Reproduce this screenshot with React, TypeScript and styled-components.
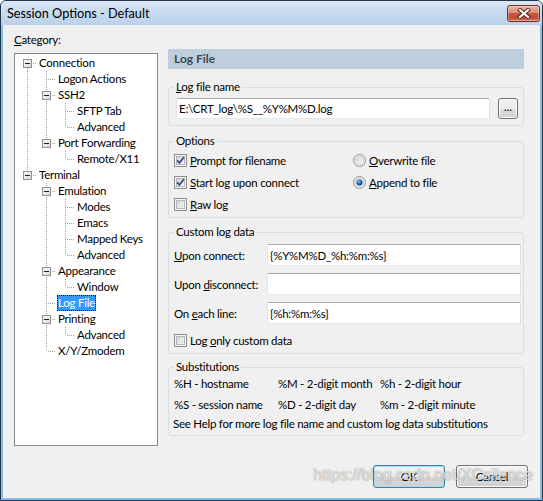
import React from "react";
import styled, { createGlobalStyle } from "styled-components";

const FONT = `Lato, "Noto Sans", sans-serif`;

const GlobalStyle = createGlobalStyle`
  html, body {
    margin: 0;
    padding: 0;
    background: #ffffff;
  }
  body {
    font-family: ${FONT};
  }
`;

const Window = styled.div`
  position: relative;
  width: 543px;
  height: 501px;
  box-sizing: border-box;
  border: 1px solid #243549;
  border-radius: 6px 6px 0 0;
  background: #86bde8;
  display: flex;
  flex-direction: column;
  overflow: hidden;
  font: 11.5px ${FONT};
  letter-spacing: -0.25px;
  color: #000;
`;

const TitleBar = styled.div`
  height: 24px;
  flex: none;
  display: flex;
  align-items: flex-start;
  justify-content: space-between;
  padding: 0 2px 0 6px;
  background: linear-gradient(to bottom, #dce8f5 0%, #c8daef 45%, #bcd2eb 100%);
`;

const Title = styled.span`
  font-size: 12.7px;
  letter-spacing: 0;
  line-height: 25px;
  color: #000;
`;

const CloseButton = styled.div`
  margin-top: 4px;
  width: 33px;
  height: 17px;
  box-sizing: border-box;
  border: 1px solid #6e2e24;
  border-radius: 3px;
  background: linear-gradient(
    to bottom,
    #eab2a2 0%,
    #db8e7b 45%,
    #c65640 50%,
    #c24a33 80%,
    #d77a5f 100%
  );
  box-shadow: inset 0 0 0 1px rgba(255, 255, 255, 0.35);
  display: flex;
  align-items: center;
  justify-content: center;
`;

const Client = styled.div`
  position: relative;
  flex: 1;
  margin: 0 2px 2px 2px;
  background: #f0f0f0;
  display: flex;
  flex-direction: column;
`;

const Main = styled.div`
  display: grid;
  grid-template-columns: 144px 356px;
  column-gap: 10px;
  align-items: start;
  padding: 7px 0 0 11px;
`;

const LeftColumn = styled.div`
  display: flex;
  flex-direction: column;
`;

const CategoryLabel = styled.div`
  line-height: 16px;
  margin-bottom: 5px;
`;

const Key = styled.span`
  text-decoration: underline;
`;

const TreeBox = styled.div`
  height: 393px;
  box-sizing: border-box;
  border: 1px solid #828790;
  background: #ffffff;
  padding: 1px 0 0 3px;
`;

const TreeRow = styled.div`
  display: flex;
  align-items: center;
  height: 16px;
`;

const TreeText = styled.span<{ $selected?: boolean }>`
  margin-left: 1px;
  padding: 0 1px;
  height: 16px;
  line-height: 16px;
  box-sizing: border-box;
  white-space: nowrap;
  background: ${(p) => (p.$selected ? "#3399ff" : "transparent")};
  color: ${(p) => (p.$selected ? "#ffffff" : "#000000")};
  outline: ${(p) => (p.$selected ? "1px dotted #1a1a1a" : "none")};
  outline-offset: -1px;
`;

const RightColumn = styled.div`
  margin-top: 17px;
  display: flex;
  flex-direction: column;
`;

const Header = styled.div`
  height: 20px;
  line-height: 20px;
  padding-left: 6px;
  background: #bfcedc;
  color: #3e4650;
  font-weight: bold;
  font-size: 12px;
  letter-spacing: 0;
`;

const Group = styled.fieldset<{ $top: number; $pad: string }>`
  margin: ${(p) => p.$top}px 0 0 0;
  padding: ${(p) => p.$pad};
  min-width: 0;
  border: 1px solid #d5dfe5;
  border-radius: 3px;
`;

const Legend = styled.legend`
  margin-left: 0;
  padding: 0 2px;
  line-height: 14px;
  color: #000;
`;

const FileRow = styled.div`
  display: flex;
  gap: 8px;
  padding-left: 2px;
`;

const TextBox = styled.input<{ $h: number }>`
  box-sizing: border-box;
  width: 100%;
  min-width: 0;
  height: ${(p) => p.$h}px;
  margin: 0;
  padding: 0 2px;
  border: 1px solid #abadb3;
  border-color: #abadb3 #dbdfe6 #e3e9ef #e2e3ea;
  border-radius: 2px;
  background: #ffffff;
  font: inherit;
  letter-spacing: inherit;
  color: #000;
  outline: none;
`;

const SmallButton = styled.button`
  flex: none;
  width: 20px;
  height: 21px;
  box-sizing: border-box;
  padding: 0 0 4px 0;
  border: 1px solid #707070;
  border-radius: 3px;
  background: linear-gradient(#f2f2f2 0%, #ebebeb 50%, #dddddd 50%, #cfcfcf 100%);
  box-shadow: inset 0 0 0 1px #fcfcfc;
  font: inherit;
  color: #000;
  line-height: 12px;
`;

const OptionsGrid = styled.div`
  display: grid;
  grid-template-columns: 179px 1fr;
  grid-auto-rows: 22px;
`;

const Choice = styled.label`
  display: flex;
  align-items: center;
  gap: 3px;
  white-space: nowrap;
`;

const CustomGrid = styled.div`
  display: grid;
  grid-template-columns: 93px 1fr;
  row-gap: 7px;
  align-items: center;
`;

const CustomCheckRow = styled.div`
  height: 22px;
  margin-top: 5px;
  display: flex;
  align-items: center;
`;

const SubsGrid = styled.div`
  display: grid;
  grid-template-columns: 104px 102px 1fr;
  row-gap: 5px;
  line-height: 16px;
  white-space: nowrap;
`;

const SubsNote = styled.div`
  margin: 3px 0 0 -1px;
  line-height: 16px;
  white-space: nowrap;
`;

const Footer = styled.div`
  margin-top: auto;
  display: flex;
  justify-content: flex-end;
  gap: 11px;
  padding: 0 12px 10px 0;
`;

const DialogButton = styled.button<{ $default?: boolean }>`
  width: 72px;
  height: 23px;
  box-sizing: border-box;
  border: 1px solid ${(p) => (p.$default ? "#3c7fb1" : "#707070")};
  border-radius: 3px;
  background: linear-gradient(#f2f2f2 0%, #ebebeb 50%, #dddddd 50%, #cfcfcf 100%);
  box-shadow: inset 0 0 0 1px ${(p) => (p.$default ? "#a7dcf5" : "#fcfcfc")};
  font: inherit;
  letter-spacing: inherit;
  color: #000;
  padding: 0;
`;

const Watermark = styled.div`
  position: absolute;
  left: 310px;
  top: 441px;
  font: 16px "Liberation Sans", Arial, sans-serif;
  letter-spacing: 0;
  color: rgba(255, 255, 255, 0.7);
  text-shadow: 0 0 1px rgba(110, 110, 110, 0.8), 1px 1px 1px rgba(0, 0, 0, 0.1);
  pointer-events: none;
  white-space: nowrap;
`;

type TreeNode = { label: string; children?: TreeNode[]; selected?: boolean };

const tree: TreeNode[] = [
  {
    label: "Connection",
    children: [
      { label: "Logon Actions" },
      { label: "SSH2", children: [{ label: "SFTP Tab" }, { label: "Advanced" }] },
      { label: "Port Forwarding", children: [{ label: "Remote/X11" }] },
    ],
  },
  {
    label: "Terminal",
    children: [
      {
        label: "Emulation",
        children: [
          { label: "Modes" },
          { label: "Emacs" },
          { label: "Mapped Keys" },
          { label: "Advanced" },
        ],
      },
      { label: "Appearance", children: [{ label: "Window" }] },
      { label: "Log File", selected: true },
      { label: "Printing", children: [{ label: "Advanced" }] },
      { label: "X/Y/Zmodem" },
    ],
  },
];

type FlatRow = {
  node: TreeNode;
  guides: boolean[];
  first: boolean;
  last: boolean;
};

const flatten = (nodes: TreeNode[], level: number, guides: boolean[], out: FlatRow[]) => {
  nodes.forEach((n, i) => {
    const last = i === nodes.length - 1;
    out.push({ node: n, guides, first: level === 0 && i === 0, last });
    if (n.children) flatten(n.children, level + 1, [...guides, !last], out);
  });
  return out;
};

const rows = flatten(tree, 0, [], []);

const DOT = "#a0a0a0";

// one 19px column of the tree: guide line, connector, and +/- box
const TreeCell = ({
  up,
  down,
  across,
  box,
}: {
  up?: boolean;
  down?: boolean;
  across?: boolean;
  box?: boolean;
}) => (
  <svg width="19" height="16" viewBox="0 0 19 16" style={{ flex: "none", display: "block" }}>
    <g stroke={DOT} strokeDasharray="1 1" shapeRendering="crispEdges">
      {up && <line x1="9.5" y1="0" x2="9.5" y2="8" />}
      {down && <line x1="9.5" y1={up ? 8 : 9} x2="9.5" y2="16" />}
      {across && <line x1="11" y1="8.5" x2="19" y2="8.5" />}
    </g>
    {box && (
      <g shapeRendering="crispEdges">
        <defs>
          <linearGradient id="tbx" x1="0" y1="0" x2="1" y2="1">
            <stop offset="0" stopColor="#ffffff" />
            <stop offset="1" stopColor="#d6d6d6" />
          </linearGradient>
        </defs>
        <rect x="5.5" y="4.5" width="8" height="8" fill="url(#tbx)" stroke="#919191" />
        <line x1="7" y1="8.5" x2="12" y2="8.5" stroke="#1e1e1e" />
      </g>
    )}
  </svg>
);

const CheckBox = ({ checked }: { checked?: boolean }) => (
  <svg width="13" height="13" viewBox="0 0 13 13" style={{ flex: "none", display: "block" }}>
    <defs>
      <linearGradient id="cbin" x1="0" y1="0" x2="1" y2="1">
        <stop offset="0" stopColor="#cfd3d8" />
        <stop offset="1" stopColor="#f6f6f6" />
      </linearGradient>
    </defs>
    <rect x="0.5" y="0.5" width="12" height="12" fill="#f4f4f4" stroke="#8f8f8f" />
    <rect x="2.5" y="2.5" width="8" height="8" fill="url(#cbin)" stroke="#b3b6bb" />
    {checked && (
      <path d="M3.2 6.3 L5.4 8.9 L9.9 3.3" fill="none" stroke="#3b4f86" strokeWidth="1.8" />
    )}
  </svg>
);

const Radio = ({ checked }: { checked?: boolean }) => (
  <svg width="13" height="13" viewBox="0 0 13 13" style={{ flex: "none", display: "block" }}>
    <defs>
      <linearGradient id="rbin" x1="0" y1="0" x2="1" y2="1">
        <stop offset="0" stopColor="#cfd3d8" />
        <stop offset="1" stopColor="#fbfbfb" />
      </linearGradient>
      <radialGradient id="rdot" cx="0.4" cy="0.35" r="0.7">
        <stop offset="0" stopColor="#7fd0f7" />
        <stop offset="0.5" stopColor="#1f6fbe" />
        <stop offset="1" stopColor="#0b2c60" />
      </radialGradient>
    </defs>
    <circle cx="6.5" cy="6.5" r="6" fill="#f4f4f4" stroke="#8f8f8f" />
    <circle cx="6.5" cy="6.5" r="4.2" fill="url(#rbin)" stroke="#c3c6ca" strokeWidth="0.8" />
    {checked && <circle cx="6.5" cy="6.5" r="3" fill="url(#rdot)" />}
  </svg>
);

const CloseGlyph = () => (
  <svg width="14" height="11" viewBox="0 0 14 11">
    <path d="M3 2 L11 9 M11 2 L3 9" stroke="#5b1f17" strokeWidth="4" strokeLinecap="square" />
    <path d="M3 2 L11 9 M11 2 L3 9" stroke="#ffffff" strokeWidth="2.2" strokeLinecap="square" />
  </svg>
);

const App = () => {
  return (
    <>
      <GlobalStyle />
      <Window>
        <TitleBar>
          <Title>Session Options - Default</Title>
          <CloseButton>
            <CloseGlyph />
          </CloseButton>
        </TitleBar>
        <Client>
          <Main>
            <LeftColumn>
              <CategoryLabel>
                <Key>C</Key>ategory:
              </CategoryLabel>
              <TreeBox>
                {rows.map((r, i) => (
                  <TreeRow key={i}>
                    {r.guides.map((g, k) => (
                      <TreeCell key={k} up={g} down={g} />
                    ))}
                    <TreeCell up={!r.first} down={!r.last} across box={!!r.node.children} />
                    <TreeText $selected={r.node.selected}>{r.node.label}</TreeText>
                  </TreeRow>
                ))}
              </TreeBox>
            </LeftColumn>

            <RightColumn>
              <Header>Log File</Header>

              <Group $top={11} $pad="4px 5px 6px 5px">
                <Legend>
                  <Key>L</Key>og file name
                </Legend>
                <FileRow>
                  <TextBox $h={21} defaultValue="E:\CRT_log\%S__%Y%M%D.log" />
                  <SmallButton>...</SmallButton>
                </FileRow>
              </Group>

              <Group $top={8} $pad="1px 5px 2px 5px">
                <Legend>Options</Legend>
                <OptionsGrid>
                  <Choice>
                    <CheckBox checked />
                    <span>
                      <Key>P</Key>rompt for filename
                    </span>
                  </Choice>
                  <Choice>
                    <Radio />
                    <span>
                      <Key>O</Key>verwrite file
                    </span>
                  </Choice>
                  <Choice>
                    <CheckBox checked />
                    <span>
                      <Key>S</Key>tart log upon connect
                    </span>
                  </Choice>
                  <Choice>
                    <Radio checked />
                    <span>
                      <Key>A</Key>ppend to file
                    </span>
                  </Choice>
                  <Choice>
                    <CheckBox />
                    <span>
                      <Key>R</Key>aw log
                    </span>
                  </Choice>
                </OptionsGrid>
              </Group>

              <Group $top={7} $pad="5px 2px 2px 5px">
                <Legend>Custom log data</Legend>
                <CustomGrid>
                  <span>
                    <Key>U</Key>pon connect:
                  </span>
                  <TextBox $h={22} defaultValue="{%Y%M%D_%h:%m:%s}" />
                  <span>
                    Upon <Key>d</Key>isconnect:
                  </span>
                  <TextBox $h={22} defaultValue="" />
                  <span>
                    On <Key>e</Key>ach line:
                  </span>
                  <TextBox $h={22} defaultValue="{%h:%m:%s}" />
                </CustomGrid>
                <CustomCheckRow>
                  <Choice>
                    <CheckBox />
                    <span>
                      Log <Key>o</Key>nly custom data
                    </span>
                  </Choice>
                </CustomCheckRow>
              </Group>

              <Group $top={6} $pad="2px 5px 3px 5px">
                <Legend>Substitutions</Legend>
                <SubsGrid>
                  <span>%H - hostname</span>
                  <span>%M - 2-digit month</span>
                  <span>%h - 2-digit hour</span>
                  <span>%S - session name</span>
                  <span>%D - 2-digit day</span>
                  <span>%m - 2-digit minute</span>
                </SubsGrid>
                <SubsNote>See Help for more log file name and custom log data substitutions</SubsNote>
              </Group>
            </RightColumn>
          </Main>

          <Footer>
            <DialogButton $default>OK</DialogButton>
            <DialogButton>Cancel</DialogButton>
          </Footer>
          <Watermark>https://blog.csdn.net/XCsilence</Watermark>
        </Client>
      </Window>
    </>
  );
};

export default App;
